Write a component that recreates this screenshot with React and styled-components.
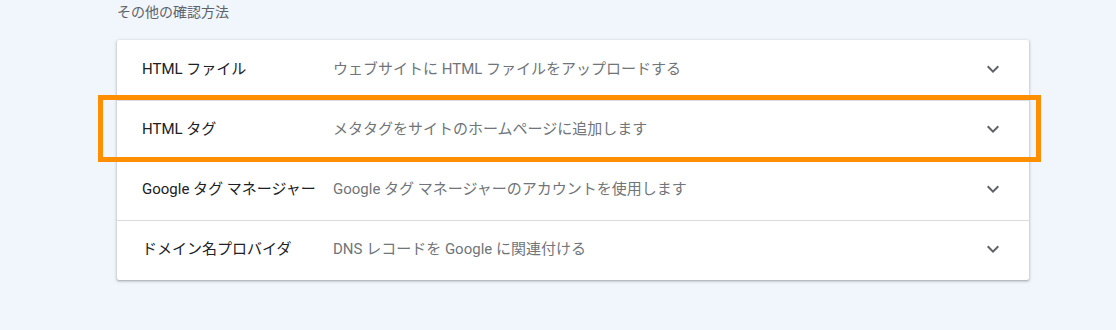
import React from 'react';
import styled, { createGlobalStyle } from 'styled-components';

const GlobalStyle = createGlobalStyle`
  html, body {
    margin: 0;
    padding: 0;
    background: #f1f5fc;
  }
  body {
    font-family: Roboto, "Noto Sans CJK JP", sans-serif;
  }
`;

const Page = styled.div`
  width: 1116px;
  height: 330px;
  padding: 2px 0 0 117px;
  box-sizing: border-box;
`;

const Heading = styled.div`
  font-size: 14px;
  color: #5f6368;
  height: 20px;
  line-height: 20px;
`;

const Card = styled.div`
  position: relative;
  width: 912px;
  margin-top: 18px;
  background: #fff;
  border-radius: 2px;
  box-shadow: 0 1px 2px rgba(60, 64, 67, 0.3), 0 1px 3px 1px rgba(60, 64, 67, 0.15);
`;

const Row = styled.div`
  display: flex;
  align-items: center;
  height: 60px;
  padding: 0 24px 3px 25px;
  box-sizing: border-box;
  border-top: ${({ first }) => (first ? 'none' : '1px solid #dadce0')};
`;

const Label = styled.div`
  width: 191px;
  flex-shrink: 0;
  font-size: 15px;
  line-height: 20px;
  color: #202124;
  white-space: nowrap;
`;

const Desc = styled.div`
  flex: 1;
  font-size: 15px;
  line-height: 20px;
  color: #70757a;
  white-space: nowrap;
`;

const Chevron = styled.svg`
  width: 24px;
  height: 24px;
  fill: #5f6368;
`;

const Highlight = styled.div`
  position: absolute;
  left: -19px;
  top: 55px;
  width: 943px;
  height: 67px;
  border: 5px solid #ff8f00;
  box-sizing: border-box;
  pointer-events: none;
`;

const methods = [
  { label: 'HTML ファイル', desc: 'ウェブサイトに HTML ファイルをアップロードする' },
  { label: 'HTML タグ', desc: 'メタタグをサイトのホームページに追加します' },
  { label: 'Google タグ マネージャー', desc: 'Google タグ マネージャーのアカウントを使用します' },
  { label: 'ドメイン名プロバイダ', desc: 'DNS レコードを Google に関連付ける' },
];

const App = () => (
  <>
    <GlobalStyle />
    <Page>
      <Heading>その他の確認方法</Heading>
      <Card>
        {methods.map((m, i) => (
          <Row key={m.label} first={i === 0}>
            <Label>{m.label}</Label>
            <Desc>{m.desc}</Desc>
            <Chevron viewBox="0 0 24 24">
              <path d="M16.59 8.59L12 13.17 7.41 8.59 6 10l6 6 6-6z" />
            </Chevron>
          </Row>
        ))}
        <Highlight />
      </Card>
    </Page>
  </>
);

export default App;
